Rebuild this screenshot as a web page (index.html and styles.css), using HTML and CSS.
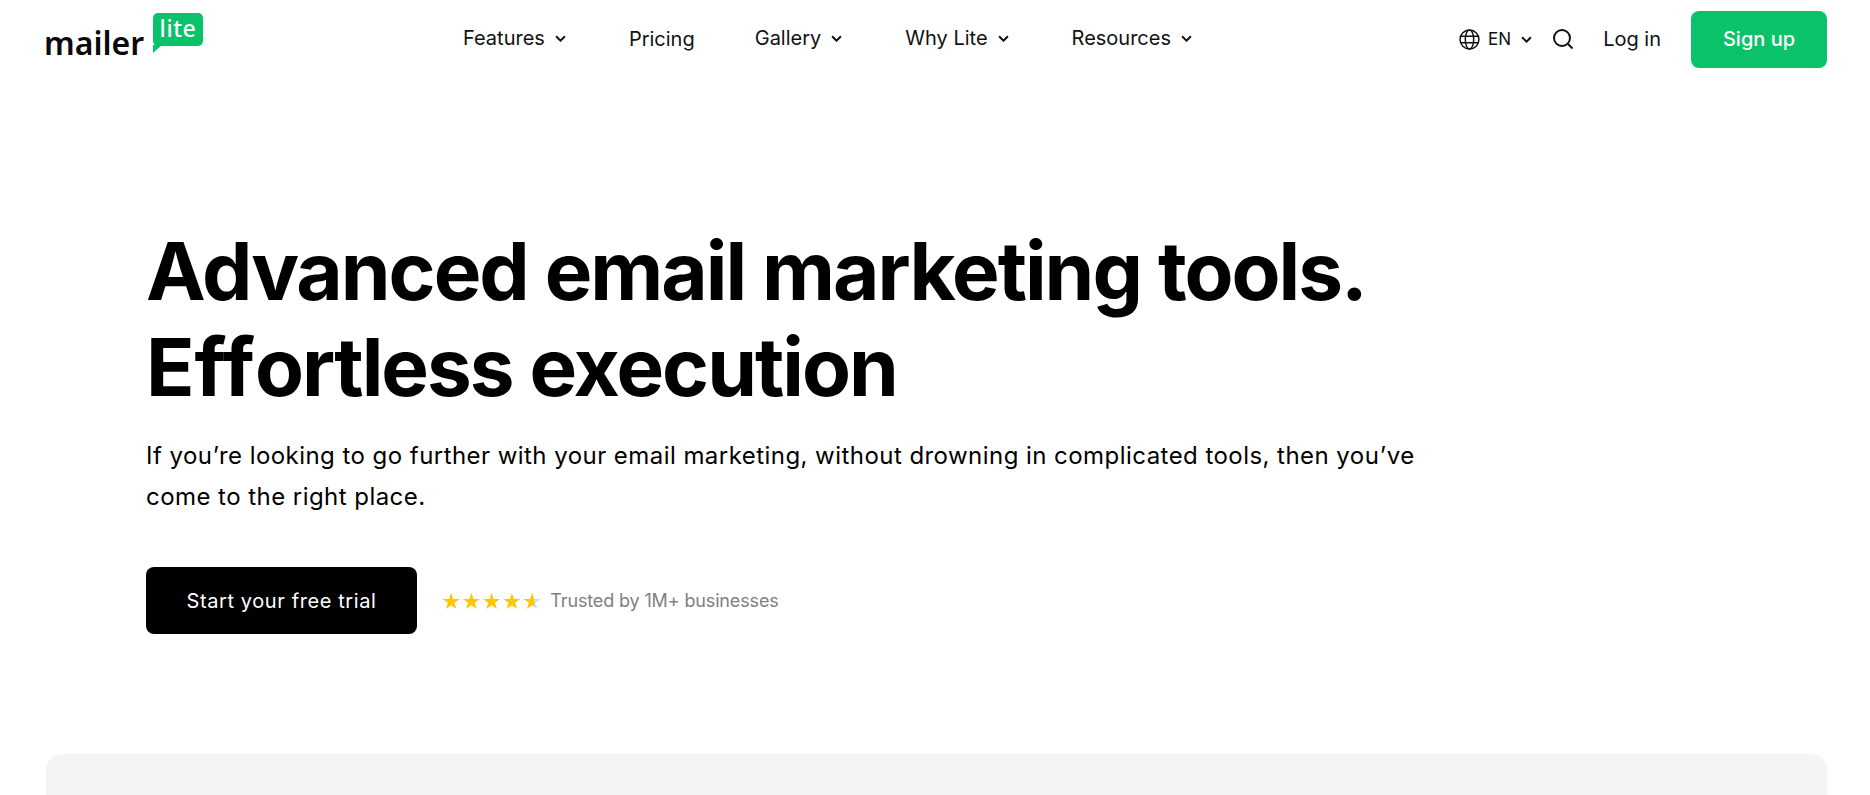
FILE: index.html
```html
<!DOCTYPE html>
<html lang="en">
<head>
  <meta charset="UTF-8" />
  <meta name="viewport" content="width=device-width, initial-scale=1.0" />
  <title>MailerLite</title>
  <link rel="stylesheet" href="styles.css">
</head>
<body>
  <header class="site-header">
    <a class="logo" href="#">
      <span class="logo-word">mailer</span>
      <span class="logo-bubble">lite</span>
    </a>

    <nav class="main-nav">
      <a class="nav-item" href="#">Features
        <svg class="chevron" viewBox="0 0 10 6"><path d="M1 1l4 4 4-4"/></svg>
      </a>
      <a class="nav-item nav-pricing" href="#">Pricing</a>
      <a class="nav-item" href="#">Gallery
        <svg class="chevron" viewBox="0 0 10 6"><path d="M1 1l4 4 4-4"/></svg>
      </a>
      <a class="nav-item" href="#">Why Lite
        <svg class="chevron" viewBox="0 0 10 6"><path d="M1 1l4 4 4-4"/></svg>
      </a>
      <a class="nav-item" href="#">Resources
        <svg class="chevron" viewBox="0 0 10 6"><path d="M1 1l4 4 4-4"/></svg>
      </a>
    </nav>

    <div class="header-actions">
      <a class="lang" href="#">
        <svg class="globe" viewBox="0 0 20 20">
          <circle cx="10" cy="10" r="9"/>
          <ellipse cx="10" cy="10" rx="4" ry="9"/>
          <path d="M1.6 7h16.8M1.6 13h16.8"/>
        </svg>
        <span>EN</span>
        <svg class="chevron" viewBox="0 0 10 6"><path d="M1 1l4 4 4-4"/></svg>
      </a>
      <a class="search" href="#">
        <svg viewBox="0 0 22 22"><circle cx="10" cy="10" r="8"/><path d="M16 16l4.5 4.5"/></svg>
      </a>
      <a class="login" href="#">Log in</a>
      <a class="signup" href="#">Sign up</a>
    </div>
  </header>

  <main>
    <section class="hero">
      <h1>Advanced email marketing tools.<br><span class="eff">Eff</span>ortless execution</h1>
      <p class="hero-text">If you’re looking to go further with your email marketing, without drowning in complicated tools, then you’ve come to the right place.</p>
      <div class="hero-cta">
        <a class="trial-btn" href="#">Start your free trial</a>
        <span class="stars">★★★★★</span>
        <span class="trusted">Trusted by 1M+ businesses</span>
      </div>
    </section>

    <div class="panel"></div>
  </main>
</body>
</html>
```

FILE: styles.css
```css
* {
  box-sizing: border-box;
}

body {
  margin: 0;
  background: #fff;
  font-family: 'Inter', sans-serif;
  font-variant-ligatures: none;
  font-feature-settings: "liga" 0, "calt" 0;
  color: #000;
}

a {
  color: inherit;
  text-decoration: none;
}

.site-header {
  display: flex;
  align-items: center;
  height: 78px;
  padding: 0 43px 0 46px;
}

.logo {
  display: flex;
  align-items: flex-start;
  width: 417px;
  height: 42px;
}

.logo-word {
  width: 109px;
  margin: 5px 0 0 -2px;
  font-family: 'Noto Sans', sans-serif;
  font-size: 32px;
  font-weight: 600;
  line-height: 40px;
  color: #09090b;
}

.logo-bubble {
  position: relative;
  width: 50px;
  height: 33px;
  margin-top: -5px;
  background: #09c269;
  border-radius: 5px;
  font-family: 'Noto Sans', sans-serif;
  font-size: 23px;
  font-weight: 500;
  line-height: 30px;
  text-align: center;
  letter-spacing: 0.6px;
  color: #fff;
}

.logo-bubble::after {
  content: "";
  position: absolute;
  left: 0;
  bottom: -7px;
  border-top: 8px solid #09c269;
  border-right: 9px solid transparent;
}

.main-nav {
  display: flex;
  align-items: center;
  gap: 63px;
  font-size: 20px;
  color: #111;
}

.nav-item {
  display: flex;
  align-items: center;
  gap: 10px;
  margin-top: -2px;
}

.nav-pricing {
  margin: 0 -3px 0 0;
}

.chevron {
  width: 11px;
  height: 7px;
  fill: none;
  stroke: #111;
  stroke-width: 1.8;
}

.header-actions {
  display: flex;
  align-items: center;
  margin-left: auto;
  font-size: 18px;
  color: #111;
}

.lang {
  display: flex;
  align-items: center;
  font-size: 17px;
}

.globe {
  width: 21px;
  height: 21px;
  margin-right: 8px;
  fill: none;
  stroke: #111;
  stroke-width: 1.4;
}

.lang .chevron {
  margin-left: 10px;
}

.search {
  display: flex;
  margin-left: 20px;
}

.search svg {
  width: 22px;
  height: 22px;
  fill: none;
  stroke: #111;
  stroke-width: 2;
}

.login {
  margin-left: 29px;
  font-size: 20px;
}

.signup {
  display: flex;
  align-items: center;
  justify-content: center;
  width: 136px;
  height: 57px;
  margin-left: 30px;
  background: #09c269;
  border-radius: 8px;
  font-size: 20px;
  font-weight: 500;
  color: #fff;
}

.hero {
  padding: 145px 147px 0 146px;
}

h1 {
  margin: 0;
  font-size: 80px;
  font-weight: 700;
  line-height: 96px;
  letter-spacing: -2px;
}

/* the two f's touch at this tracking */
.eff {
  letter-spacing: 0;
}

.hero-text {
  width: 1300px;
  margin: 20px 0 0;
  font-size: 24px;
  line-height: 41px;
  letter-spacing: 0.45px;
}

.hero-cta {
  display: flex;
  align-items: center;
  margin-top: 50px;
}

.trial-btn {
  display: flex;
  align-items: center;
  justify-content: center;
  width: 271px;
  height: 67px;
  background: #000;
  border-radius: 8px;
  font-size: 20px;
  letter-spacing: 0.6px;
  color: #fff;
}

.stars {
  margin-left: 24px;
  font-family: 'DejaVu Sans', sans-serif;
  font-size: 22.6px;
  background: linear-gradient(90deg, #ffc700 92%, #dcdcdc 92%);
  -webkit-background-clip: text;
  background-clip: text;
  color: transparent;
}

.trusted {
  margin-left: 8px;
  font-size: 18px;
  letter-spacing: -0.14px;
  color: #808080;
}

.panel {
  height: 41px;
  margin: 120px 43px 0 46px;
  background: #f4f4f4;
  border-radius: 16px 16px 0 0;
}
```
